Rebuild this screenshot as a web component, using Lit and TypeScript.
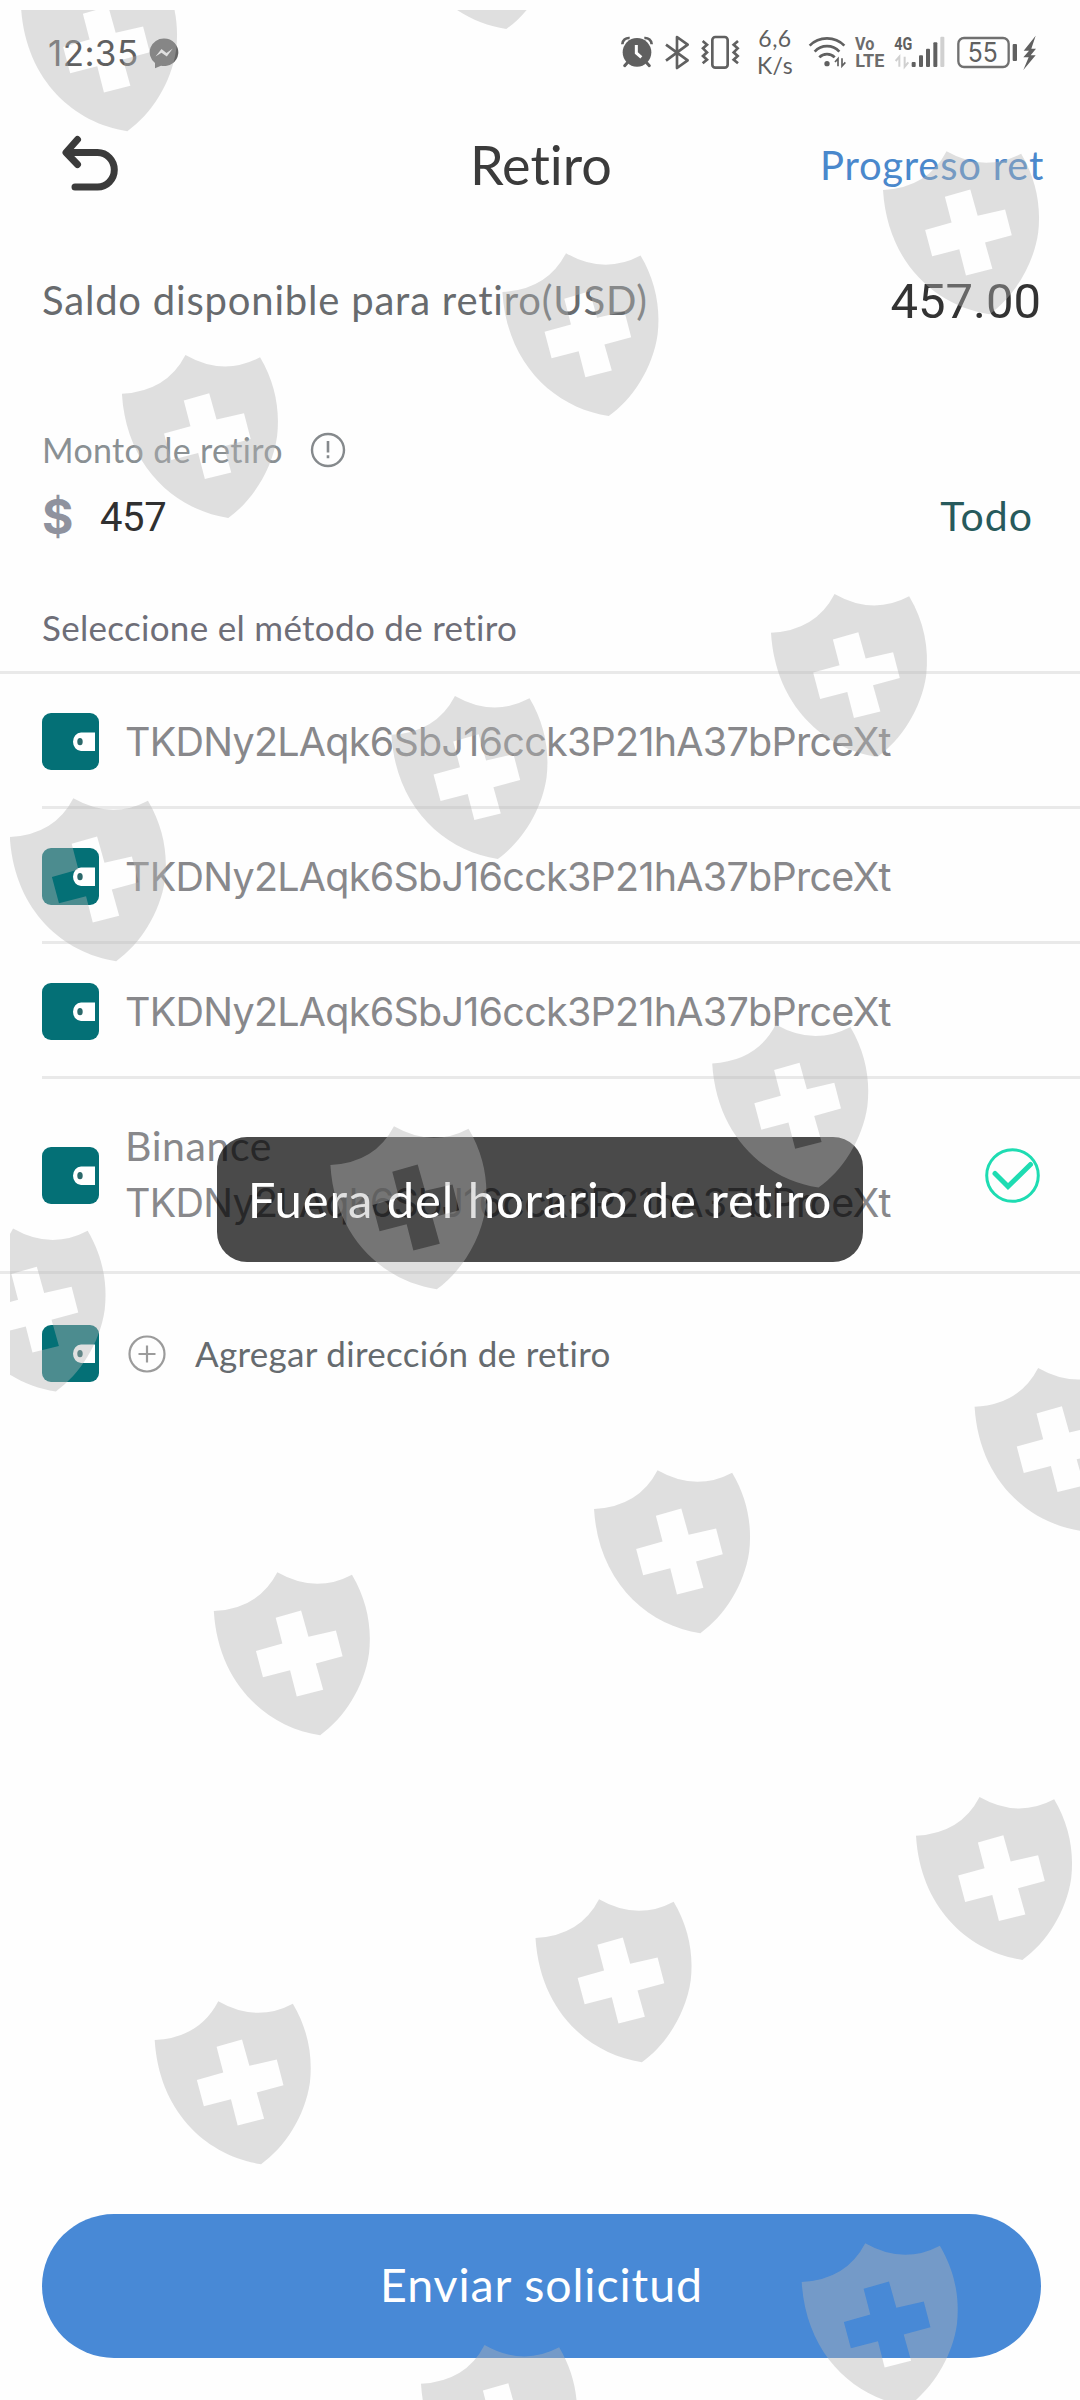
import { LitElement, html, css, svg } from "lit";
import { customElement, property } from "lit/decorators.js";

const ADDRESS = "TKDNy2LAqk6SbJ16cck3P21hA37bPrceXt";

const METHODS = [
  { name: "", address: ADDRESS, selected: false },
  { name: "", address: ADDRESS, selected: false },
  { name: "", address: ADDRESS, selected: false },
  { name: "Binance", address: ADDRESS, selected: true },
];

// top left corner of every shield in the overlay
const SHIELDS = [
  [21, -31.7], [400, -134],
  [883, 151.3], [502.4, 253.2], [121.9, 355],
  [771, 594], [391.4, 696], [9.8, 798.3],
  [712.2, 1024.6], [330.4, 1126.3], [-50.5, 1228.5],
  [974.6, 1368], [594, 1470.3], [213.8, 1572.3],
  [916, 1797], [535.5, 1899.3], [154.7, 2001.3],
  [801.7, 2243.3], [421, 2345],
];

@customElement("wallet-icon")
export class WalletIcon extends LitElement {
  static styles = css`
    :host {
      display: block;
      width: 57px;
      height: 57px;
      flex: none;
    }
    svg {
      display: block;
    }
  `;

  render() {
    return html`
      <svg width="57" height="57" viewBox="0 0 57 57">
        <rect width="57" height="57" rx="9" fill="#047076" />
        <path d="M53 19.5H39a8 9.3 0 0 0 0 18.6h14z" fill="#fff" />
        <ellipse cx="38" cy="28.7" rx="2.7" ry="3.6" fill="#2b686a" />
      </svg>
    `;
  }
}

@customElement("shield-overlay")
export class ShieldOverlay extends LitElement {
  static styles = css`
    :host {
      position: absolute;
      top: 10px;
      left: 10px;
      right: 0;
      bottom: 0;
      overflow: hidden;
      pointer-events: none;
    }
    svg {
      display: block;
    }
  `;

  render() {
    return html`
      <svg width="1070" height="2390" viewBox="10 10 1070 2390">
        ${SHIELDS.map(([x, y]) => svg`
          <path
            transform="translate(${x} ${y}) scale(0.3345) translate(-42 -37)"
            fill="#b4b4b4" fill-opacity="0.41" fill-rule="evenodd"
            d="M42 153Q176 146 232 37Q346 102 455 44C500 120 515 200 506 280C492 380 430 475 360 524C200 500 55 370 42 153Z
               M227 173L303 151L325 230L407 211L427 288L347 310L369 388L290 408L270 330L189 351L168 272L247 250Z"
          />`)}
      </svg>
    `;
  }
}

@customElement("status-bar")
export class StatusBar extends LitElement {
  static styles = css`
    :host {
      display: flex;
      align-items: center;
      height: 105px;
      padding: 0 40px 0 48px;
      color: #606060;
      font-family: Roboto, sans-serif;
    }
    .time {
      font-family: Inter, sans-serif;
      font-size: 35px;
      letter-spacing: 0.4px;
      width: 101px;
    }
    .icons {
      display: flex;
      margin-left: auto;
      height: 47px;
      margin-top: 2px;
    }
    .speed {
      width: 60px;
      text-align: center;
      font-family: Lato, sans-serif;
      font-size: 23px;
      letter-spacing: 0.5px;
      line-height: 27px;
      margin-top: -5px;
    }
    svg {
      display: block;
      flex: none;
    }
  `;

  render() {
    return html`
      <div class="time">12:35</div>
      <svg width="30" height="32" viewBox="0 0 30 32">
        <path d="M15 1.5a14 13.8 0 1 1-3 27.2l-6 2.6v-5.2A14 13.8 0 0 1 15 1.5z" fill="#666" />
        <path d="M6.5 19.5l6-7.5 5 4 6.3-4.5-6 8-5.3-3.8z" fill="#fff" />
      </svg>
      <div class="icons">
        <svg width="40" height="47" viewBox="60 90 120 141" fill="none" stroke="#606060">
          <circle cx="111" cy="157" r="43" fill="#606060" stroke="none" />
          <path d="M67 133c0-12 10-20 22-19M155 133c0-12-10-20-22-19" stroke-width="8" />
          <path d="M82 188l-8 9M140 188l8 9" stroke-width="9" stroke-linecap="round" />
          <path d="M109 135v24l15 13" stroke="#fff" stroke-width="9" />
        </svg>
        <svg width="35" height="47" viewBox="180 90 105 141" fill="none" stroke="#606060" stroke-width="8" stroke-linejoin="round">
          <path d="M198 134l65 47-32 23v-93l32 23-65 48" />
        </svg>
        <svg width="50" height="47" viewBox="285 90 150 141" fill="none" stroke="#606060">
          <rect x="337" y="111" width="46" height="92" rx="9" stroke-width="8" />
          <path d="M308 123l13 11-12 11 12 12-12 11 12 11-13 11M414 123l-13 11 12 11-12 12 12 11-12 11 13 11" stroke-width="8" />
        </svg>
        <div class="speed">6,6<br />K/s</div>
        <svg width="45" height="47" viewBox="615 90 135 141" fill="none" stroke="#606060">
          <path d="M629 137c28-29 76-29 104 0M644 155c20-22 54-22 74 0M658 172c12-13 34-13 46 0" stroke-width="8" />
          <circle cx="681" cy="191" r="8" fill="#606060" stroke="none" />
          <path d="M714 199v-23l-9 10M726 175v23l10-11" stroke-width="5" />
        </svg>
        <svg width="40" height="47" viewBox="750 90 120 141" fill="#6c6c6c" font-family="Roboto" font-weight="700">
          <text x="765" y="150" font-size="54" textLength="58" lengthAdjust="spacingAndGlyphs">Vo</text>
          <text x="766" y="202" font-size="54" textLength="87" lengthAdjust="spacingAndGlyphs">LTE</text>
        </svg>
        <svg width="60" height="47" viewBox="870 90 180 141" fill="#606060">
          <text x="883" y="150" font-size="56" font-family="Roboto" font-weight="700" textLength="54" lengthAdjust="spacingAndGlyphs">4G</text>
          <path d="M898 200v-30l-11 13M914 170v30l11-13" fill="none" stroke="#d0d0d0" stroke-width="6" />
          <rect x="935" y="186" width="12" height="15" rx="3" />
          <rect x="957" y="166" width="12" height="35" rx="3" />
          <rect x="978" y="146" width="12" height="55" rx="3" />
          <rect x="1000" y="127" width="12" height="74" rx="3" />
          <rect x="1021" y="110" width="12" height="91" rx="3" fill="#d0d0d0" />
        </svg>
        <svg width="70" height="47" viewBox="1050 90 210 141" fill="#606060">
          <rect x="1075" y="114" width="151" height="87" rx="17" fill="none" stroke="#707070" stroke-width="7" />
          <text x="1103" y="185" font-size="80" font-family="Inter" font-weight="400" textLength="90" lengthAdjust="spacingAndGlyphs">55</text>
          <rect x="1238" y="132" width="13" height="51" rx="3" />
        </svg>
        <svg width="20" height="47" viewBox="1260 90 60 141" fill="#606060">
          <path d="M1307 107l-36 45h16l-17 20h16l-16 38 37-44h-15l16-20h-14z" />
        </svg>
      </div>
    `;
  }
}

@customElement("method-row")
export class MethodRow extends LitElement {
  @property({ type: String }) name = "";
  @property({ type: String }) address = "";
  @property({ type: Boolean }) selected = false;

  static styles = css`
    :host {
      display: block;
    }
    .row {
      box-sizing: border-box;
      display: flex;
      align-items: center;
      height: 135px;
      margin-left: 42px;
      padding: 3px 39px 0 0;
      border-bottom: 3px solid #e9e9e9;
    }
    .tall {
      height: 195px;
      margin-left: 0;
      padding: 1px 39px 0 42px;
    }
    .text {
      margin-left: 26px;
      padding-top: 2px;
      flex: 1;
      font-family: Inter, sans-serif;
      font-weight: 400;
      font-size: 39.5px;
      line-height: 57px;
      letter-spacing: -0.75px;
      white-space: nowrap;
      color: #88888b;
    }
    .name {
      margin-top: -4px;
      padding-bottom: 1px;
      font-family: Lato, sans-serif;
      font-weight: 400;
      font-size: 41px;
      letter-spacing: 0.6px;
      color: #88888b;
    }
  `;

  render() {
    return html`
      <div class="row ${this.name ? "tall" : ""}">
        <wallet-icon></wallet-icon>
        <div class="text">
          ${this.name ? html`<div class="name">${this.name}</div>` : ""}
          <div class="address">${this.address}</div>
        </div>
        ${this.selected
          ? html`
            <svg width="57" height="57" viewBox="0 0 57 57" fill="none" stroke="#1edcb2">
              <circle cx="28.5" cy="28.5" r="25.8" stroke-width="3" />
              <path d="M11 26.5L24 39.5 46.5 17.5" stroke-width="5" stroke-linecap="round" />
            </svg>`
          : ""}
      </div>
    `;
  }
}

@customElement("app-root")
export class AppRoot extends LitElement {
  static styles = css`
    :host {
      position: relative;
      display: flex;
      flex-direction: column;
      width: 1080px;
      height: 2400px;
      overflow: hidden;
      background: #fefefe;
      font-family: Lato, sans-serif;
      font-variant-ligatures: none;
    }
    svg {
      display: block;
      flex: none;
    }
    .header {
      display: grid;
      grid-template-columns: 1fr auto 1fr;
      align-items: center;
      height: 119px;
      padding: 0 36px 1px;
    }
    .title {
      margin-left: 2px;
      font-size: 54px;
      color: #3b3b3b;
    }
    .progress {
      justify-self: end;
      font-size: 40px;
      letter-spacing: 0.75px;
      color: #4a88cc;
    }
    .back {
      margin: -5px 0 0 25px;
    }
    .balance {
      display: flex;
      align-items: center;
      justify-content: space-between;
      height: 152px;
      padding: 0 39px 0 42px;
      font-size: 40px;
      letter-spacing: 0.8px;
      color: #686b6e;
    }
    .caption {
      margin-top: -3px;
    }
    .total {
      font-family: Roboto, sans-serif;
      font-size: 49px;
      letter-spacing: 0;
      color: #333;
    }
    .label {
      display: flex;
      align-items: center;
      height: 60px;
      margin-top: 43px;
      padding-left: 42px;
      font-size: 34px;
      letter-spacing: 0.35px;
      color: #8a9093;
    }
    .label span {
      margin-top: -1px;
    }
    .label svg {
      margin-left: 27px;
    }
    .amount {
      display: flex;
      align-items: center;
      height: 73px;
      padding: 0 47px 0 42px;
      font-size: 40px;
    }
    .dollar {
      width: 58px;
      font-family: Inter, sans-serif;
      font-weight: 700;
      font-size: 48px;
      color: #8f929e;
    }
    .value {
      margin-top: 2px;
      font-family: Roboto, sans-serif;
      letter-spacing: -0.4px;
      color: #303030;
    }
    .all {
      margin: -2px 0 0 auto;
      font-size: 41px;
      letter-spacing: 1px;
      color: #275a5c;
    }
    .pick {
      display: flex;
      align-items: center;
      height: 82px;
      margin-top: 33px;
      padding: 0 0 3px 42px;
      border-bottom: 3px solid #e9e9e9;
      font-size: 35px;
      letter-spacing: 0.3px;
      color: #6e6e78;
    }
    .add {
      display: flex;
      align-items: center;
      height: 159px;
      padding-left: 42px;
      font-size: 35px;
      letter-spacing: 0.3px;
      color: #666b6f;
    }
    .add svg {
      margin: 0 29px;
    }
    .add span {
      margin-top: -2px;
    }
    .submit {
      box-sizing: border-box;
      display: flex;
      align-items: center;
      justify-content: center;
      height: 144px;
      margin: auto 39px 42px 42px;
      padding-bottom: 4px;
      border-radius: 72px;
      background: #4889d6;
      color: #fff;
      font-size: 46.5px;
      letter-spacing: 0.9px;
    }
    .toast {
      position: absolute;
      top: 1137px;
      left: 217px;
      box-sizing: border-box;
      display: flex;
      align-items: center;
      justify-content: center;
      width: 646px;
      height: 125px;
      padding-bottom: 2px;
      border-radius: 30px;
      background: rgba(0, 0, 0, 0.71);
      color: #fff;
      font-size: 49px;
      letter-spacing: 0.9px;
      white-space: nowrap;
    }
  `;

  render() {
    return html`
      <status-bar></status-bar>
      <div class="header">
        <svg class="back" width="57" height="57" viewBox="0 0 57 57" fill="none" stroke="#3b3b3b" stroke-width="7" stroke-linecap="round">
          <path d="M16.5 5.5L5 18.5l11.5 12" stroke-linejoin="round" />
          <path d="M8 18.5h28.5a16.8 17.3 0 0 1 0 34.6H14" />
        </svg>
        <div class="title">Retiro</div>
        <div class="progress">Progreso ret</div>
      </div>

      <div class="balance">
        <div class="caption">Saldo disponible para retiro(USD)</div>
        <div class="total">457.00</div>
      </div>

      <div class="label">
        <span>Monto de retiro</span>
        <svg width="36" height="36" viewBox="0 0 36 36" fill="none" stroke="#85898c">
          <circle cx="18" cy="18" r="16" stroke-width="2.4" />
          <path d="M18 9v11.5M18 23.3v3" stroke-width="2.6" />
        </svg>
      </div>
      <div class="amount">
        <div class="dollar">$</div>
        <div class="value">457</div>
        <div class="all">Todo</div>
      </div>

      <div class="pick"><span>Seleccione el método de retiro</span></div>
      ${METHODS.map((m) => html`
        <method-row name=${m.name} address=${m.address} ?selected=${m.selected}></method-row>
      `)}
      <div class="add">
        <wallet-icon></wallet-icon>
        <svg width="38" height="38" viewBox="0 0 38 38" fill="none" stroke="#9b9b9b" stroke-width="2.2">
          <circle cx="19" cy="19" r="17.5" />
          <path d="M19 10.5v17M10.5 19h17" />
        </svg>
        <span>Agregar dirección de retiro</span>
      </div>

      <div class="submit"><span>Enviar solicitud</span></div>
      <div class="toast"><span>Fuera del horario de retiro</span></div>
      <shield-overlay></shield-overlay>
    `;
  }
}
